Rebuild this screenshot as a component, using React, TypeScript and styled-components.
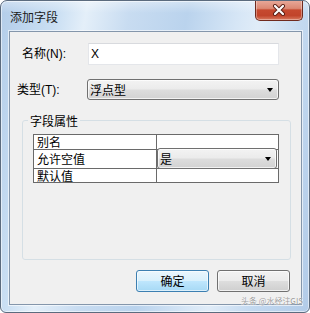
import React from 'react';
import styled, { createGlobalStyle } from 'styled-components';

const GlobalStyle = createGlobalStyle`
  html, body {
    margin: 0;
    padding: 0;
    background: #ffffff;
  }
  body {
    font-family: "Liberation Sans", "Noto Sans CJK SC", sans-serif;
    font-size: 12px;
    color: #000;
  }
`;

const Frame = styled.div`
  position: relative;
  box-sizing: border-box;
  width: 310px;
  height: 313px;
  border: 1px solid #5b6b7e;
  border-radius: 7px 7px 6px 6px;
  padding: 0 7px 7px 8px;
  display: flex;
  flex-direction: column;
  background:
    linear-gradient(180deg, rgba(255,255,255,0.35) 0px, rgba(255,255,255,0) 12px),
    linear-gradient(100deg, #b3cde9 0%, #cadff3 16%, #e4eff9 24%, #c8dcf1 36%,
      #bad3ed 52%, #d6e6f6 66%, #e0ecf8 72%, #c3d9f0 84%, #b2cbe8 100%);
  box-shadow: inset 0 0 0 1px rgba(255,255,255,0.55);
  overflow: hidden;
`;

const TitleBar = styled.div`
  height: 30px;
  display: flex;
  justify-content: space-between;
  align-items: flex-start;
`;

const Title = styled.div`
  margin: 8px 0 0 1px;
  font-family: "Noto Sans CJK SC", sans-serif;
  font-size: 12px;
  line-height: 16px;
  color: #1b1b1b;
`;

const CloseButton = styled.div`
  box-sizing: border-box;
  width: 48px;
  height: 21px;
  margin: -1px -1px 0 0;
  border: 1px solid #6f2a1e;
  border-top: none;
  border-radius: 0 0 5px 5px;
  background: linear-gradient(180deg, #e9ab9c 0%, #dc8873 42%, #c6492f 50%, #c1442b 78%, #d97a5f 100%);
  box-shadow: inset 0 0 0 1px rgba(255,255,255,0.35);
  display: flex;
  align-items: center;
  justify-content: center;
`;

const Client = styled.div`
  flex: 1;
  display: flex;
  flex-direction: column;
  border: 1px solid #8496ab;
  background: #f0f0f0;
  box-shadow: 0 0 0 1px rgba(255,255,255,0.6);
  padding-top: 11px;
`;

const FieldRow = styled.div<{ $gap?: number }>`
  display: flex;
  align-items: center;
  margin-top: ${p => p.$gap ?? 0}px;
`;

const Label = styled.div<{ $indent: number; $width: number }>`
  box-sizing: border-box;
  width: ${p => p.$width}px;
  padding-left: ${p => p.$indent}px;
  font-size: 12px;
  line-height: 16px;
  white-space: nowrap;
`;

const TextBox = styled.div`
  box-sizing: border-box;
  width: 191px;
  height: 22px;
  padding: 0 2px;
  background: #ffffff;
  border: 1px solid #e4e6ea;
  border-top-color: #d8dade;
  display: flex;
  align-items: center;
  font-size: 12px;
`;

const Combo = styled.div<{ $width: number }>`
  position: relative;
  box-sizing: border-box;
  width: ${p => p.$width}px;
  height: 21px;
  padding: 0 5px 0 2px;
  border: 1px solid #707070;
  border-radius: 3px;
  background: linear-gradient(180deg, #f3f3f3 0%, #ebebeb 48%, #dddddd 52%, #d2d2d2 100%);
  box-shadow: inset 0 0 0 1px rgba(255,255,255,0.7);
  display: flex;
  align-items: center;
  justify-content: space-between;
  font-family: "Noto Sans CJK SC", sans-serif;
  font-size: 12px;
  line-height: 16px;
`;

const Arrow = styled.span`
  width: 0;
  height: 0;
  border-left: 3.5px solid transparent;
  border-right: 3.5px solid transparent;
  border-top: 4px solid #000;
  margin-top: 1px;
`;

const Group = styled.fieldset`
  flex: 1;
  box-sizing: border-box;
  margin: 13px 10px 0 12px;
  padding: 0 0 0 10px;
  min-width: 0;
  border: 1px solid #d5dfe5;
  border-radius: 3px;
`;

const Legend = styled.legend`
  margin-left: -5px;
  padding: 0 2px;
  font-family: "Noto Sans CJK SC", sans-serif;
  font-size: 12px;
  line-height: 15px;
`;

const PropTable = styled.div`
  margin-top: 6px;
  width: 246px;
  box-sizing: border-box;
  display: grid;
  grid-template-columns: 122px 121px;
  grid-template-rows: 14px 18px 13px;
  gap: 1px;
  border: 1px solid #6a6a6a;
  background: #6a6a6a;
`;

const Cell = styled.div`
  background: #ffffff;
  padding-left: 3px;
  display: flex;
  align-items: center;
  font-family: "Noto Sans CJK SC", sans-serif;
  font-size: 12px;
  line-height: 14px;
  white-space: nowrap;
`;

const ComboCell = styled.div`
  background: #ffffff;
  display: flex;
  align-items: flex-start;
`;

const TableCombo = styled(Combo)`
  margin-top: -2px;
  height: 21px;
`;

const ButtonRow = styled.div`
  display: flex;
  justify-content: flex-end;
  gap: 8px;
  margin: 10px 11px 12px 0;
`;

const Button = styled.div<{ $primary?: boolean }>`
  box-sizing: border-box;
  width: 73px;
  height: 22px;
  border-radius: 3px;
  border: 1px solid ${p => (p.$primary ? '#3c7fb1' : '#707070')};
  background: ${p =>
    p.$primary
      ? 'linear-gradient(180deg, #eaf6fd 0%, #d9f0fc 48%, #bee6fd 52%, #a7d9f5 100%)'
      : 'linear-gradient(180deg, #f2f2f2 0%, #ebebeb 48%, #dddddd 52%, #cfcfcf 100%)'};
  box-shadow: inset 0 0 0 1px ${p => (p.$primary ? 'rgba(255,255,255,0.6)' : 'rgba(255,255,255,0.7)')};
  display: flex;
  align-items: center;
  justify-content: center;
  font-family: "Noto Sans CJK SC", sans-serif;
  font-size: 12px;
  line-height: 16px;
`;

const Watermark = styled.div`
  position: absolute;
  right: 6px;
  bottom: 7px;
  font-family: "Noto Sans CJK SC", sans-serif;
  font-size: 8px;
  line-height: 9px;
  color: #9a9a9a;
  text-shadow: 0 0 1px #fff, 0 0 1px #fff;
  white-space: nowrap;
`;

const CloseGlyph = () => (
  <svg width="14" height="12" viewBox="0 0 14 12">
    <path d="M3 2 L11 10 M11 2 L3 10" stroke="#5a1e14" strokeWidth="4" strokeLinecap="round" />
    <path d="M3 2 L11 10 M11 2 L3 10" stroke="#ffffff" strokeWidth="2.2" strokeLinecap="round" />
  </svg>
);

const App = () => {
  return (
    <>
      <GlobalStyle />
      <Frame>
        <TitleBar>
          <Title>添加字段</Title>
          <CloseButton>
            <CloseGlyph />
          </CloseButton>
        </TitleBar>
        <Client>
          <FieldRow>
            <Label $indent={12} $width={78}>名称(N):</Label>
            <TextBox>X</TextBox>
          </FieldRow>
          <FieldRow $gap={14}>
            <Label $indent={7} $width={77}>类型(T):</Label>
            <Combo $width={192}>
              <span>浮点型</span>
              <Arrow />
            </Combo>
          </FieldRow>
          <Group>
            <Legend>字段属性</Legend>
            <PropTable>
              <Cell>别名</Cell>
              <Cell />
              <Cell>允许空值</Cell>
              <ComboCell>
                <TableCombo $width={120}>
                  <span>是</span>
                  <Arrow />
                </TableCombo>
              </ComboCell>
              <Cell>默认值</Cell>
              <Cell />
            </PropTable>
          </Group>
          <ButtonRow>
            <Button $primary>确定</Button>
            <Button>取消</Button>
          </ButtonRow>
        </Client>
        <Watermark>头条 @水经注GIS</Watermark>
      </Frame>
    </>
  );
};

export default App;
